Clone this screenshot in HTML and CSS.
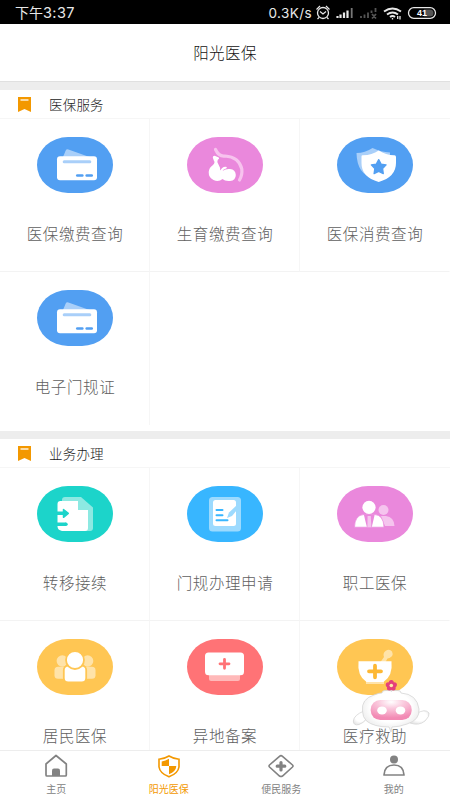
FILE: index.html
```html
<!DOCTYPE html>
<html lang="zh-CN">
<head>
<meta charset="utf-8">
<title>阳光医保</title>
<link rel="stylesheet" href="styles.css">
</head>
<body>
<svg class="defs" width="0" height="0">
  <symbol id="cards" viewBox="0 0 76 56">
    <path d="M26 20l2.600-6.300q.8-1.800 2.800-1.200L52.500 20z" fill="#a9cff9"/>
    <rect x="20" y="19.300" width="40" height="24" rx="3" fill="#fff"/>
    <rect x="25.700" y="23.200" width="28.600" height="3.100" rx="1.500" fill="#a9cff9"/>
    <rect x="39" y="37.200" width="7.600" height="2.500" rx="1.200" fill="#529ff2"/>
    <rect x="48.400" y="37.200" width="7.600" height="2.500" rx="1.200" fill="#529ff2"/>
  </symbol>
  <symbol id="mark" viewBox="0 0 13 15">
    <path d="M0 0h13v15l-6.500-3L0 15z" fill="#f39800"/>
    <path d="M2.500 3h8" stroke="#fff" stroke-width="1.300"/>
  </symbol>
</svg>
<div class="status">
  <span class="time">下午<span class="digits">3:37</span></span>
  <span class="speed">0.3K/s</span>
  <svg class="signals" width="126" height="20" viewBox="0 0 126 20" fill="none" stroke="#e8e8e8">
    <circle cx="8" cy="10" r="5.500" stroke-width="1.300"/>
    <path d="M1.500 6.500l3.500-3.500M14.500 6.500L11 3M5 8.500l3 2.500 3-2.500M4 14.500L2.500 16M12 14.500L13.500 16" stroke-width="1.200"/>
    <path d="M22.500 15v-2M25.500 15v-3.500M29 15V9.500M32.500 15V7.500" stroke-width="2.200"/>
    <path d="M36.700 15V5" stroke="#777" stroke-width="1.800"/>
    <path d="M46 15v-2M49.500 15v-3.500M53 15V9.500M56.500 10V7.500M60.500 9V5M57 11l4 4.500M61 11l-4 4.500" stroke="#555" stroke-width="1.800"/>
    <path d="M69 8.500q8.500-6 17 0M72 11.500q5.500-4 11 0M75 14q2.500-2 5 0" stroke-width="1.900"/>
    <path d="M77.500 16.500v-1.500M82.700 16v-3M85 13v3.500" stroke-width="1.300"/>
    <rect x="93.500" y="4.700" width="27" height="10.600" rx="5.300" stroke-width="1.300"/>
    <path d="M109 6.500h6q3.500 0 3.500 3.500t-3.500 3.500h-6z" fill="#555" stroke="none"/>
    <text x="107" y="13.300" text-anchor="middle" class="battery">41</text>
  </svg>
</div>
<header class="title">阳光医保</header>

<main>
  <section class="group first">
    <h2><svg width="13" height="15"><use href="#mark"/></svg><span>医保服务</span></h2>
    <div class="grid">
      <div class="cell"><div class="pill blue"><svg viewBox="0 0 76 56"><use href="#cards"/></svg></div><p>医保缴费查询</p></div>
      <div class="cell"><div class="pill pink"><svg viewBox="0 0 76 56">
        <path d="M28.500 12.500Q32 20 38 19Q52 20 54.800 32Q55.500 38 52.500 43" fill="none" stroke="#f7c3ee" stroke-width="3.200" stroke-linecap="round"/>
        <path d="M25.800 20.500Q26 18 28.300 19L31.800 20.500Q32.800 22 30.800 22.800Q29.500 25 31.500 27.500Q33.500 30.500 33 33.500L35.200 31Q37.500 29 39.800 30Q40 31.500 38.500 31.700Q36.500 32 35.500 34Q39 31.500 43 32Q48.500 32.500 48.800 38Q48.800 43.500 43 44Q38 44.500 35.500 42Q31.500 45.500 26.500 43Q21.500 40.500 21.700 35Q22 30.500 26 28Q28.500 25.500 26.800 23.500z" fill="#fff"/>
      </svg></div><p>生育缴费查询</p></div>
      <div class="cell"><div class="pill blue"><svg viewBox="0 0 76 56">
        <path d="M19.500 16Q28 16 35.500 11Q44 15 53 15.500V26Q50 38 37 41Q20 38 19.500 16z" fill="#a9cff9"/>
        <path d="M26 18.300Q35 18 41.700 13.500Q49 18 57 18.300Q59 18 59 20V26Q59 40 41.700 45Q24.300 40 24.500 26V19.500Q24.500 18 26 18.300z" fill="#fff"/>
        <path d="M41.700 22.600l2.400 4.500 5 .8-3.500 3.700.7 5-4.600-2.200-4.600 2.200.7-5-3.500-3.700 5-.8z" fill="#529ff2" stroke="#529ff2" stroke-width="1.300" stroke-linejoin="round"/>
      </svg></div><p>医保消费查询</p></div>
      <div class="cell"><div class="pill blue"><svg viewBox="0 0 76 56"><use href="#cards"/></svg></div><p>电子门规证</p></div>
    </div>
  </section>

  <section class="group">
    <h2><svg width="13" height="15"><use href="#mark"/></svg><span>业务办理</span></h2>
    <div class="grid">
      <div class="cell"><div class="pill teal"><svg viewBox="0 0 76 56">
        <path d="M28 11h16l12 10.500V42q0 3-3 3H28q-3 0-3-3V14q0-3 3-3z" fill="#8de9e2"/>
        <path d="M23.500 15H41v9h10v18q0 3-3 3H25q-4.500-1-4.500-4.500V18q0-3 3-3z" fill="#fff"/>
        <path d="M20 27.300h6M20 38.300h9" stroke="#1cd4ca" stroke-width="3.400"/><circle cx="29" cy="38.300" r="1.700" fill="#1cd4ca"/>
        <path d="M26.500 23.500l4.800 3.800-4.800 4z" fill="#1cd4ca" stroke="#1cd4ca" stroke-width="1.500" stroke-linejoin="round"/>
      </svg></div><p>转移接续</p></div>
      <div class="cell"><div class="pill sky"><svg viewBox="0 0 76 56">
        <rect x="22" y="11" width="32" height="34.500" rx="3.500" fill="#9cdafe"/>
        <rect x="26" y="14" width="23" height="26" rx="2.500" fill="#fff"/>
        <path d="M29.500 24h6M29.500 29.200h6M29.500 34.200h11" stroke="#38b6ff" stroke-width="2" stroke-linecap="round"/>
        <path d="M50 19L42 26.500l-2 5.500 5-2 5-6z" fill="#9cdafe"/>
      </svg></div><p>门规办理申请</p></div>
      <div class="cell"><div class="pill pink"><svg viewBox="0 0 76 56">
        <circle cx="46.500" cy="24" r="5" fill="#f5c4ee"/><path d="M44 30h5q8 1 8.500 10H48z" fill="#f5c4ee"/>
        <circle cx="32" cy="21.300" r="7.400" fill="#ea88dc"/><circle cx="32" cy="21.300" r="6.600" fill="#fff"/>
        <path d="M17.500 41.200Q17.800 29 27 28.500h10.500Q46.500 29 47 41.200z" fill="#fff" stroke="#ea88dc" stroke-width=".7"/>
        <path d="M26.800 28.500l3.200 12.900h4.700l3-12.900z" fill="#ea88dc"/><path d="M30.600 30h3.200l.6 11.200h-4z" fill="#f5c4ee"/>
      </svg></div><p>职工医保</p></div>
      <div class="cell"><div class="pill yellow"><svg viewBox="0 0 76 56">
        <g fill="#ffe3a9"><circle cx="25.300" cy="22" r="5.700"/><circle cx="50.600" cy="22" r="5.700"/><rect x="17.500" y="27.800" width="17" height="12" rx="3.500"/><rect x="41.500" y="27.800" width="17" height="12" rx="3.500"/></g>
        <g fill="#fff" stroke="#ffc653" stroke-width="1.800"><rect x="26.800" y="26.500" width="22.400" height="17" rx="4.500"/><circle cx="38" cy="21" r="9"/></g>
      </svg></div><p>居民医保</p></div>
      <div class="cell"><div class="pill red"><svg viewBox="0 0 76 56">
        <rect x="22" y="30" width="31" height="12" rx="2" fill="#ffb9b9"/><rect x="18" y="13.500" width="39" height="22.800" rx="3.500" fill="#fff"/>
        <path d="M37.500 20.300v9M33 24.800h9" stroke="#ff7376" stroke-width="2.800" stroke-linecap="round"/>
      </svg></div><p>异地备案</p></div>
      <div class="cell"><div class="pill yellow"><svg viewBox="0 0 76 56">
        <path d="M43.500 23l3.500-5q-1.500-3.500 1.500-6 4-2.500 6.500.500 2 4.500-2.500 6.500l-2 .5-2 3.500z" fill="#ffe3a9"/>
        <path d="M29 41h18v4H29z" fill="#ffe3a9"/>
        <path d="M21.500 22.300h33Q56 37 46.500 43h-17Q20 37 21.500 22.300z" fill="#fff"/>
        <path d="M38 26.700v11.600M32 32.300h12" stroke="#fdb834" stroke-width="3.800" stroke-linecap="round"/>
      </svg></div><p>医疗救助</p></div>
    </div>
  </section>
</main>

<svg class="mascot" width="80" height="58" viewBox="0 0 80 58">
  <defs>
    <radialGradient id="face" cx=".5" cy=".1" r=".8"><stop offset="0" stop-color="#fff"/><stop offset=".4" stop-color="#fac9dd"/><stop offset="1" stop-color="#f28ab4"/></radialGradient>
    <radialGradient id="body" cx=".5" cy=".4" r=".6"><stop offset=".6" stop-color="#fff"/><stop offset="1" stop-color="#e8e8e8"/></radialGradient>
  </defs>
  <g fill="url(#body)" stroke="#d6d6d6" stroke-width=".8">
    <path d="M12 33Q2 37 1.300 43Q1.500 48 7 46.500Q12 45 15 40z"/>
    <path d="M64 36Q73 30 77 35Q78 38 73 43Q67 48 58 45z"/>
    <path d="M10.500 33Q9 21 22 17Q28 14.500 30 15Q30 12.500 33 12.500H46Q49 12.500 49 15Q65 16 67 31Q68 42 55 46Q47 49 40 49L39 54L37 49Q22 49 14.500 43Q10.500 39 10.500 33z"/>
  </g>
  <rect x="18.700" y="22" width="41" height="20" rx="9.500" fill="url(#face)"/>
  <ellipse cx="30" cy="32.400" rx="4.800" ry="4" fill="#fff"/><ellipse cx="48.500" cy="32.400" rx="4.800" ry="4" fill="#fff"/>
  <path d="M39.300 10v4" stroke="#ddd"/>
  <g fill="#e43f7c"><circle cx="39.300" cy="4.600" r="2.500"/><circle cx="42.400" cy="6.700" r="2.500"/><circle cx="41.200" cy="10" r="2.500"/><circle cx="37.400" cy="10" r="2.500"/><circle cx="36.200" cy="6.700" r="2.500"/></g>
  <circle cx="39.300" cy="7.500" r="1.800" fill="#fbe9a8"/>
</svg>

<nav class="tabs">
  <div class="tab"><svg width="28" height="24" viewBox="0 0 28 24" fill="none" stroke="#828282">
    <path d="M4 10L14 1.500 24.300 10v11q0 1-1 1H5q-1 0-1-1z" stroke-width="1.700" stroke-linejoin="round"/><path d="M10 22v-5.500q0-2 2-2h4q2 0 2 2V22z" fill="#828282" stroke="none"/></svg>主页</div>
  <div class="tab active"><svg width="28" height="24" viewBox="0 0 28 24">
    <path d="M14 2Q19 5 24 5.200V13Q23 19.500 14 22.800Q5 19.500 4 13V5.200Q9 5 14 2z" fill="none" stroke="#f39800" stroke-width="1.600"/><path d="M14 4.800V12H6.700V7.500Q10.500 7 14 4.800zM14 12h7.300Q21 17.500 14 20.300z" fill="#f39800"/></svg>阳光医保</div>
  <div class="tab"><svg width="28" height="24" viewBox="0 0 28 24" fill="none" stroke="#828282">
    <path d="M12.500 2.300Q14 1 15.500 2.300L25.500 11Q26.500 12 25.500 13L15.500 22Q14 23 12.500 22L2.500 13Q1.500 12 2.500 11z" stroke-width="1.600"/><path d="M14 8.500v7.500M10.200 12.200h7.600" stroke-width="3.200" stroke-linecap="round"/></svg>便民服务</div>
  <div class="tab"><svg width="28" height="24" viewBox="0 0 28 24">
    <circle cx="14" cy="5.500" r="4" fill="#828282"/><path d="M4 21Q4.500 11 14 11T24 21z" fill="none" stroke="#828282" stroke-width="1.700" stroke-linejoin="round"/></svg>我的</div>
</nav>
</body>
</html>
```
FILE: styles.css
```css
* { box-sizing: border-box; }
body {
  margin: 0;
  width: 450px;
  height: 800px;
  overflow: hidden;
  display: flex;
  flex-direction: column;
  background: #fff;
  font-family: "Noto Sans CJK SC", sans-serif;
  font-weight: 300;
  position: relative;
}
h2, p { margin: 0; font-weight: inherit; }
.defs { position: absolute; }
.status {
  flex: none;
  height: 24px;
  background: #000;
  color: #e8e8e8;
  display: flex;
  align-items: center;
  padding: 2px 9px 0 15px;
  font: 14px/20px Inter, "Noto Sans CJK SC", sans-serif;
}
.time { flex: 1; }
.digits { letter-spacing: 0.4px; font-size: 14.5px; }
.speed { font-size: 13.5px; letter-spacing: 0.4px; margin-right: 3px; }
.battery { font: bold 9px "Liberation Sans", sans-serif; fill: #fff; stroke: none; }
.title {
  flex: none;
  height: 58px;
  border-bottom: 1px solid #e0e0e0;
  text-align: center;
  font-size: 15.5px;
  letter-spacing: 0.4px;
  line-height: 57px;
  color: #111;
}
main { flex: 1; min-height: 0; overflow: hidden; }
.group { border-top: 8px solid #ededed; }
.group.first { height: 349px; }
h2 {
  height: 29px;
  display: flex;
  align-items: center;
  gap: 18px;
  padding-left: 18px;
  border-bottom: 1px solid #f6f6f6;
  color: #222;
  font-size: 13.5px;
  letter-spacing: 0.2px;
}
h2 span { padding-bottom: 1px; }
.grid {
  display: grid;
  grid-template-columns: repeat(3, 150px);
  grid-auto-rows: 153px;
}
.cell {
  padding-top: 18px;
  display: flex;
  flex-direction: column;
  align-items: center;
  border-right: 1px solid #f6f6f6;
  border-bottom: 1px solid #f3f3f3;
}
.cell:nth-child(3n) { border-right-color: transparent; }
.first .cell:nth-child(4) { border-bottom: 0; }
.cell p {
  margin-top: 28px;
  padding-left: 1px;
  line-height: 24px;
  font-size: 15.5px;
  letter-spacing: 0.6px;
  color: #606060;
}
.pill {
  width: 76px;
  height: 56px;
  border-radius: 31px / 28px;
  overflow: hidden;
}
.pill svg { display: block; width: 76px; height: 56px; }
.blue { background: #529ff2; }
.pink { background: #ea88dc; }
.teal { background: #1cd4ca; }
.sky { background: #38b6ff; }
.yellow { background: #ffc653; }
.red { background: #ff7376; }
.mascot { position: absolute; left: 352px; top: 678px; }
.tabs {
  flex: none;
  height: 50px;
  display: flex;
  border-top: 1px solid #ededed;
  background: #fff;
}
.tab {
  flex: 1;
  display: flex;
  flex-direction: column;
  align-items: center;
  padding-top: 3px;
  font-size: 10px;
  font-weight: 400;
  line-height: 16px;
  color: #828282;
}
.tab svg { margin-bottom: 3px; }
.active { color: #f39800; }
```
